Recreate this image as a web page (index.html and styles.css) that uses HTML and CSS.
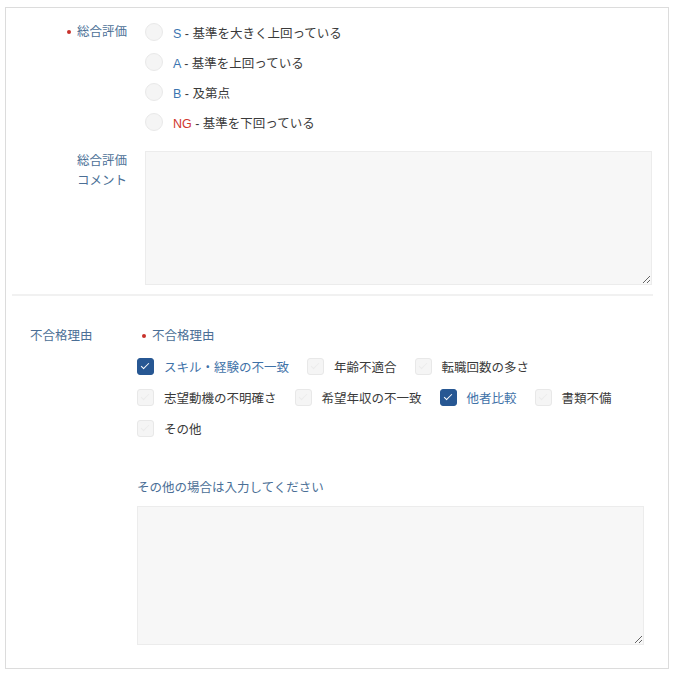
FILE: index.html
```html
<!DOCTYPE html>
<html lang="ja">
<head>
  <meta charset="UTF-8" />
  <meta name="viewport" content="width=device-width, initial-scale=1.0" />
  <title>評価フォーム</title>
  <link rel="stylesheet" href="styles.css">
</head>
<body>
  <div class="panel">

    <div class="eval">
      <div class="field-label"><span class="req"></span>総合評価</div>
      <div class="radios">
        <label class="radio"><span class="circle"></span><span><b class="grade">S</b> - 基準を大きく上回っている</span></label>
        <label class="radio"><span class="circle"></span><span><b class="grade">A</b> - 基準を上回っている</span></label>
        <label class="radio"><span class="circle"></span><span><b class="grade">B</b> - 及第点</span></label>
        <label class="radio"><span class="circle"></span><span><b class="grade ng">NG</b> - 基準を下回っている</span></label>
      </div>

      <div class="field-label multi">総合評価<br>コメント</div>
      <textarea class="comment"></textarea>
    </div>

    <hr class="divider">

    <div class="reasons">
      <div class="section-label">不合格理由</div>
      <div class="reason-body">
        <div class="sub-label"><span class="req"></span>不合格理由</div>
        <div class="checks">
          <label class="check on"><span class="box"></span>スキル・経験の不一致</label>
          <label class="check"><span class="box"></span>年齢不適合</label>
          <label class="check"><span class="box"></span>転職回数の多さ</label>
          <label class="check"><span class="box"></span>志望動機の不明確さ</label>
          <label class="check"><span class="box"></span>希望年収の不一致</label>
          <label class="check on"><span class="box"></span>他者比較</label>
          <label class="check"><span class="box"></span>書類不備</label>
          <label class="check"><span class="box"></span>その他</label>
        </div>
        <div class="other-label">その他の場合は入力してください</div>
        <textarea class="other"></textarea>
      </div>
    </div>

  </div>
</body>
</html>
```

FILE: styles.css
```css
body {
  margin: 0;
  padding: 0;
  font-family: 'Liberation Sans', 'Noto Sans CJK JP', sans-serif;
  font-size: 12.5px;
  color: #3a3a3a;
  background: #fff;
}
.panel {
  width: 662px;
  margin: 7px 0 0 5px;
  border: 1px solid #dcdcdc;
}

/* 総合評価 */
.eval {
  display: grid;
  grid-template-columns: 121px 1fr;
  column-gap: 18px;
  row-gap: 14px;
  padding: 9px 16px 0 0;
}
.field-label {
  text-align: right;
  color: #4b6f96;
  line-height: 30px;
}
.field-label.multi {
  line-height: 20px;
}
.req {
  display: inline-block;
  width: 4px;
  height: 4px;
  border-radius: 50%;
  background: #c8312b;
  margin: 0 6px 2px 0;
  vertical-align: middle;
}
.radio {
  display: flex;
  align-items: center;
  gap: 10px;
  height: 30px;
}
.circle {
  width: 16px;
  height: 16px;
  border-radius: 50%;
  background: #f5f5f5;
  border: 1px solid #e9e9e9;
}
.grade {
  font-weight: normal;
  color: #3c75b0;
}
.grade.ng {
  color: #d0362e;
}
textarea {
  display: block;
  box-sizing: border-box;
  width: 100%;
  background: #f7f7f7;
  border: 1px solid #ececec;
  border-radius: 0;
  font: inherit;
  margin: 0;
}
.comment {
  height: 134px;
}

.divider {
  margin: 9px 15px 0 6px;
  border: none;
  height: 2px;
  background: #f1f1f1;
}

/* 不合格理由 */
.reasons {
  display: grid;
  grid-template-columns: 107px 1fr;
  padding: 30px 24px 23px 24px;
}
.section-label {
  color: #4b6f96;
  line-height: 20px;
}
.sub-label {
  color: #4b6f96;
  line-height: 20px;
  padding-left: 5px;
  margin-bottom: 5px;
}
.checks {
  display: flex;
  flex-wrap: wrap;
  column-gap: 18px;
}
.check {
  display: flex;
  align-items: center;
  gap: 10px;
  height: 31px;
}
.box {
  position: relative;
  box-sizing: border-box;
  width: 17px;
  height: 17px;
  border-radius: 3px;
  background: #f5f5f5;
  border: 1px solid #e8e8e8;
}
.box::after {
  content: '';
  position: absolute;
  left: 5px;
  top: 2px;
  width: 3px;
  height: 7px;
  border: solid #ebebeb;
  border-width: 0 1.5px 1.5px 0;
  transform: rotate(45deg);
}
.check.on {
  color: #3f72a8;
}
.check.on .box {
  background: #275793;
  border-color: #275793;
}
.check.on .box::after {
  border-color: #fff;
}
.other-label {
  color: #4b6f96;
  line-height: 20px;
  margin: 34px 0 8px;
}
.other {
  height: 139px;
}
```
